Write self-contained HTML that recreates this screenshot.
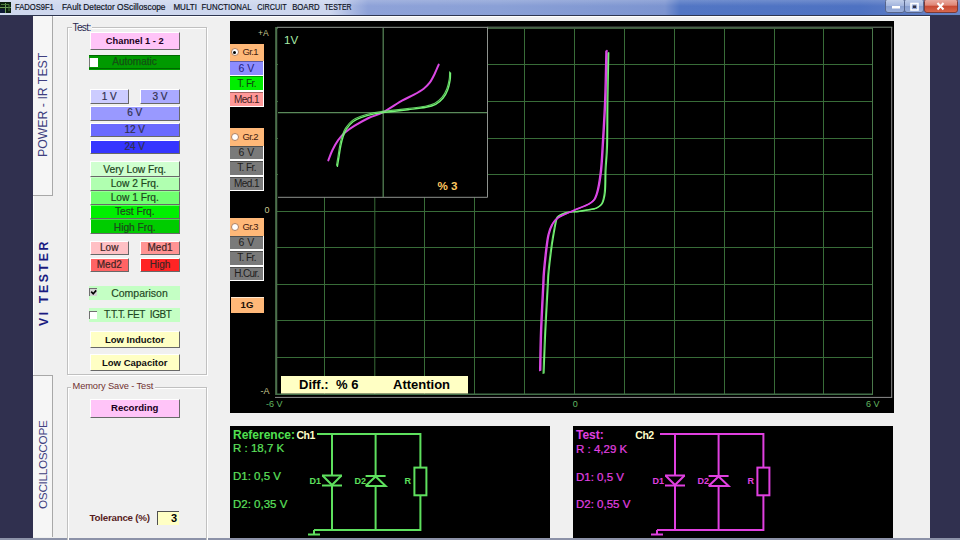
<!DOCTYPE html>
<html><head><meta charset="utf-8">
<style>
*{margin:0;padding:0;box-sizing:border-box}
html,body{width:960px;height:540px;overflow:hidden;background:#f0f0f0;font-family:"Liberation Sans",sans-serif;position:relative}
.a{position:absolute}
.t{position:absolute;white-space:nowrap;line-height:1}
#title{left:0;top:0;width:960px;height:15px;background:linear-gradient(90deg,#cfd8ee 0px,#ccd6ee 330px,#8ea2d8 368px,#8aa0d6 500px,#7c94d0 665px,#5276c4 680px,#4e72c2 860px,#6a86c8 960px)}
.btn{position:absolute;border-right:1px solid #6a6a6a;border-bottom:2px solid #6a6a6a;border-top:1px solid #fff;border-left:1px solid #fff;text-align:center;color:#303060;font-size:11px;line-height:12px}
.gb{position:absolute;border:1px solid #b8b8b8;box-shadow:1px 1px 0 #fff, inset 1px 1px 0 #fff}
.gr{position:absolute;left:230px;width:34px;background:#fff}
.gi{position:absolute;left:1px;width:32px;text-align:center;font-size:9.5px;line-height:13px;color:#202040}
</style></head><body>
<div id="title" class="a"></div>
<div class="a" style="left:0;top:0;width:960px;height:6px;background:linear-gradient(rgba(255,255,255,0.18),rgba(255,255,255,0))"></div>
<div class="a" style="left:0;top:15px;width:960px;height:1px;background:#2e3650"></div>
<div class="a" style="left:0;top:16px;width:960px;height:1px;background:#fff"></div>
<svg class="a" style="left:0;top:0" width="960" height="16">
<rect x="0" y="2" width="11" height="11" fill="#0c2010"/>
<rect x="0" y="9" width="6" height="4" fill="#101850" opacity="0.6"/>
<line x1="0" y1="7.5" x2="11" y2="7.5" stroke="#6a9a5a" stroke-width="1"/>
<line x1="5.5" y1="3" x2="5.5" y2="13" stroke="#6a9a5a" stroke-width="1"/>
<polyline points="1,4.5 9,4.5 9,11" fill="none" stroke="#4a7a3a" stroke-width="1"/>
<g font-family="Liberation Sans, sans-serif" font-size="9.4" fill="#10141e" stroke="#10141e" stroke-width="0.2">
<text x="15" y="10.3" textLength="38.8" lengthAdjust="spacingAndGlyphs">FADOS9F1</text>
<text x="62" y="10.3" textLength="103.5" lengthAdjust="spacingAndGlyphs">FAult Detector OScilloscope</text>
<text x="173.4" y="10.3" textLength="23.5" lengthAdjust="spacingAndGlyphs">MULTI</text>
<text x="201.6" y="10.3" textLength="50" lengthAdjust="spacingAndGlyphs">FUNCTIONAL</text>
<text x="257.2" y="10.3" textLength="29.4" lengthAdjust="spacingAndGlyphs">CIRCUIT</text>
<text x="292.2" y="10.3" textLength="27.5" lengthAdjust="spacingAndGlyphs">BOARD</text>
<text x="324.4" y="10.3" textLength="27.2" lengthAdjust="spacingAndGlyphs">TESTER</text>
</g>
<!-- window buttons -->
<rect x="885.5" y="-1" width="19" height="13.5" rx="2.5" fill="url(#gb)" stroke="#56648a" stroke-width="1"/>
<rect x="904.5" y="-1" width="19" height="13.5" rx="2.5" fill="url(#gb)" stroke="#56648a" stroke-width="1"/>
<rect x="924.5" y="-1" width="33" height="13.5" rx="2.5" fill="url(#gr)" stroke="#7a3a38" stroke-width="1"/>
<defs>
<linearGradient id="gb" x1="0" y1="0" x2="0" y2="1"><stop offset="0" stop-color="#c8d4ec"/><stop offset="0.5" stop-color="#a4b6de"/><stop offset="0.55" stop-color="#8aa0d0"/><stop offset="1" stop-color="#9cb0dc"/></linearGradient>
<linearGradient id="gr" x1="0" y1="0" x2="0" y2="1"><stop offset="0" stop-color="#eab0a8"/><stop offset="0.45" stop-color="#e08878"/><stop offset="0.55" stop-color="#c84a34"/><stop offset="1" stop-color="#d86a50"/></linearGradient>
</defs>
<rect x="892" y="6" width="8" height="2.5" fill="#fff"/>
<rect x="911" y="3.5" width="7" height="6.5" fill="none" stroke="#fff" stroke-width="1.6"/>
<rect x="913" y="5.5" width="3" height="2.5" fill="#334"/>
<path d="M937.5,3 L943.5,9.5 M943.5,3 L937.5,9.5" stroke="#fff" stroke-width="2"/>
</svg>
<!-- side navy -->
<div class="a" style="left:0;top:16px;width:33px;height:524px;background:#30304f"></div>
<div class="a" style="left:930px;top:16px;width:30px;height:524px;background:#30304f"></div>
<div class="a" style="left:0;top:537.5px;width:960px;height:2.5px;background:#8c92a8"></div>

<div class="a" style="left:33px;top:16px;width:20px;height:180px;background:#f6f6f6;border-right:1px solid #a8a8a8;border-bottom:1px solid #a8a8a8"></div>
<div class="a" style="left:33px;top:375px;width:20px;height:162px;background:#f6f6f6;border-right:1px solid #a8a8a8;border-top:1px solid #a8a8a8"></div>
<div class="a" style="left:33px;top:196px;width:1px;height:179px;background:#fff"></div>
<div class="t" style="left:37.3px;top:157px;font-size:12.3px;color:#404080;transform-origin:0 0;transform:rotate(-90deg)">POWER - IR TEST</div>
<div class="t" style="left:37.5px;top:326.3px;font-size:12.3px;font-weight:bold;color:#1a1a80;letter-spacing:2.6px;transform-origin:0 0;transform:rotate(-90deg)">VI TESTER</div>
<div class="t" style="left:37.6px;top:509.3px;font-size:11.8px;letter-spacing:-0.33px;color:#404080;transform-origin:0 0;transform:rotate(-90deg)">OSCILLOSCOPE</div>
<div class="a" style="left:67px;top:27px;width:140px;height:348px;border:1px solid #c0c0c0;box-shadow:1px 1px 0 #fff, inset 1px 1px 0 #fff"></div>
<div class="t" style="left:71.5px;top:22.6px;font-size:10.2px;color:#282850;background:#f0f0f0;padding:0 1px;letter-spacing:-0.7px">Test:</div>
<div class="a" style="left:67px;top:387px;width:140px;height:160px;border:1px solid #c0c0c0;box-shadow:1px 1px 0 #fff, inset 1px 1px 0 #fff"></div>
<div class="t" style="left:71px;top:382.3px;font-size:9.3px;color:#703030;background:#f0f0f0;padding:0 1.5px;letter-spacing:-0.1px">Memory Save - Test</div>
<div class="a" style="left:89.5px;top:32px;width:90.5px;height:18px;background:#ffc4f8;border-top:1px solid #fff;border-left:1px solid #fff;border-right:1px solid #686868;border-bottom:1px solid #686868"></div>
<div class="t" style="left:89.5px;top:32px;width:90.5px;height:18px;line-height:18px;text-align:center;font-size:9.3px;font-weight:bold;color:#200020;letter-spacing:0px">Channel 1 - 2</div>
<div class="a" style="left:89px;top:55px;width:91px;height:14.5px;background:#009a00"></div>
<div class="a" style="left:89px;top:55px;width:91px;height:1.2px;background:#006a00"></div>
<div class="a" style="left:89px;top:68.2px;width:91px;height:1.3px;background:#006a00"></div>
<div class="a" style="left:89px;top:58px;width:9.2px;height:9px;background:#fff;border-left:1.6px solid #787878"></div>
<div class="t" style="left:89px;top:55px;width:91px;height:14.5px;line-height:14.5px;text-align:center;font-size:10px;color:#145014;-webkit-text-stroke:0.25px #145014">Automatic</div>
<div class="a" style="left:89.5px;top:88.5px;width:39.5px;height:15.0px;background:#ccccff;border-top:1px solid #fff;border-left:1px solid #fff;border-right:1px solid #686868;border-bottom:1px solid #686868"></div>
<div class="t" style="left:89.5px;top:88.5px;width:39.5px;height:15.0px;line-height:15.0px;text-align:center;font-size:10px;font-weight:normal;color:#303050;letter-spacing:0px;-webkit-text-stroke:0.2px #303050">1 V</div>
<div class="a" style="left:140px;top:88.5px;width:40px;height:15.0px;background:#aaaaff;border-top:1px solid #fff;border-left:1px solid #fff;border-right:1px solid #686868;border-bottom:1px solid #686868"></div>
<div class="t" style="left:140px;top:88.5px;width:40px;height:15.0px;line-height:15.0px;text-align:center;font-size:10px;font-weight:normal;color:#303050;letter-spacing:0px;-webkit-text-stroke:0.2px #303050">3 V</div>
<div class="a" style="left:89.5px;top:106px;width:90.5px;height:14.5px;background:#9999ff;border-top:1px solid #fff;border-left:1px solid #fff;border-right:1px solid #686868;border-bottom:1px solid #686868"></div>
<div class="t" style="left:89.5px;top:106px;width:90.5px;height:14.5px;line-height:14.5px;text-align:center;font-size:10px;font-weight:normal;color:#303050;letter-spacing:0px;-webkit-text-stroke:0.2px #303050">6 V</div>
<div class="a" style="left:89.5px;top:123px;width:90.5px;height:14px;background:#6a6aff;border-top:1px solid #fff;border-left:1px solid #fff;border-right:1px solid #686868;border-bottom:1px solid #686868"></div>
<div class="t" style="left:89.5px;top:123px;width:90.5px;height:14px;line-height:14px;text-align:center;font-size:10px;font-weight:normal;color:#303050;letter-spacing:0px;-webkit-text-stroke:0.2px #303050">12 V</div>
<div class="a" style="left:89.5px;top:140px;width:90.5px;height:14px;background:#3535ff;border-top:1px solid #fff;border-left:1px solid #fff;border-right:1px solid #686868;border-bottom:1px solid #686868"></div>
<div class="t" style="left:89.5px;top:140px;width:90.5px;height:14px;line-height:14px;text-align:center;font-size:10px;font-weight:normal;color:#303050;letter-spacing:0px;-webkit-text-stroke:0.2px #303050">24 V</div>
<div class="a" style="left:89.5px;top:161px;width:90.5px;height:15.5px;background:#d0ffd0;border-top:1px solid #fff;border-left:1px solid #fff;border-right:1px solid #686868;border-bottom:1px solid #686868"></div>
<div class="t" style="left:89.5px;top:161.8px;width:90.5px;height:15.5px;line-height:15.5px;text-align:center;font-size:10.2px;font-weight:normal;color:#1e461e;letter-spacing:0px;-webkit-text-stroke:0.2px #1e461e">Very Low Frq.</div>
<div class="a" style="left:89.5px;top:176.5px;width:90.5px;height:14.0px;background:#b0ffb0;border-top:1px solid #c8ffc8;border-left:1px solid #fff;border-right:1px solid #686868;border-bottom:1px solid #686868"></div>
<div class="t" style="left:89.5px;top:176.8px;width:90.5px;height:14.0px;line-height:14.0px;text-align:center;font-size:10.2px;font-weight:normal;color:#1e461e;letter-spacing:0px;-webkit-text-stroke:0.2px #1e461e">Low 2 Frq.</div>
<div class="a" style="left:89.5px;top:190.5px;width:90.5px;height:14.0px;background:#70ff70;border-top:1px solid #98ff98;border-left:1px solid #fff;border-right:1px solid #686868;border-bottom:1px solid #686868"></div>
<div class="t" style="left:89.5px;top:190.8px;width:90.5px;height:14.0px;line-height:14.0px;text-align:center;font-size:10.2px;font-weight:normal;color:#1e461e;letter-spacing:0px;-webkit-text-stroke:0.2px #1e461e">Low 1 Frq.</div>
<div class="a" style="left:89.5px;top:204.5px;width:90.5px;height:14.5px;background:#00f000;border-top:1px solid #60ff60;border-left:1px solid #fff;border-right:1px solid #686868;border-bottom:1px solid #686868"></div>
<div class="t" style="left:89.5px;top:205.0px;width:90.5px;height:14.5px;line-height:14.5px;text-align:center;font-size:10.2px;font-weight:normal;color:#1e461e;letter-spacing:0px;-webkit-text-stroke:0.2px #1e461e">Test Frq.</div>
<div class="a" style="left:89.5px;top:219px;width:90.5px;height:15px;background:#00cc00;border-top:1px solid #40e040;border-left:1px solid #fff;border-right:1px solid #686868;border-bottom:1px solid #686868"></div>
<div class="t" style="left:89.5px;top:219.5px;width:90.5px;height:15px;line-height:15px;text-align:center;font-size:10.2px;font-weight:normal;color:#1e461e;letter-spacing:0px;-webkit-text-stroke:0.2px #1e461e">High Frq.</div>
<div class="a" style="left:89.5px;top:240.5px;width:39.5px;height:14.5px;background:#ffc0c4;border-top:1px solid #fff;border-left:1px solid #fff;border-right:1px solid #686868;border-bottom:1px solid #686868"></div>
<div class="t" style="left:89.5px;top:240.5px;width:39.5px;height:14.5px;line-height:14.5px;text-align:center;font-size:10px;font-weight:normal;color:#402424;letter-spacing:0px;-webkit-text-stroke:0.2px #402424">Low</div>
<div class="a" style="left:140px;top:240.5px;width:40px;height:14.5px;background:#ff9494;border-top:1px solid #fff;border-left:1px solid #fff;border-right:1px solid #686868;border-bottom:1px solid #686868"></div>
<div class="t" style="left:140px;top:240.5px;width:40px;height:14.5px;line-height:14.5px;text-align:center;font-size:10px;font-weight:normal;color:#402424;letter-spacing:0px;-webkit-text-stroke:0.2px #402424">Med1</div>
<div class="a" style="left:89.5px;top:258px;width:39.5px;height:14px;background:#ff6464;border-top:1px solid #fff;border-left:1px solid #fff;border-right:1px solid #686868;border-bottom:1px solid #686868"></div>
<div class="t" style="left:89.5px;top:258px;width:39.5px;height:14px;line-height:14px;text-align:center;font-size:10px;font-weight:normal;color:#402424;letter-spacing:0px;-webkit-text-stroke:0.2px #402424">Med2</div>
<div class="a" style="left:140px;top:258px;width:40px;height:14px;background:#ff2424;border-top:1px solid #fff;border-left:1px solid #fff;border-right:1px solid #686868;border-bottom:1px solid #686868"></div>
<div class="t" style="left:140px;top:258px;width:40px;height:14px;line-height:14px;text-align:center;font-size:10px;font-weight:normal;color:#402424;letter-spacing:0px;-webkit-text-stroke:0.2px #402424">High</div>
<div class="a" style="left:89px;top:285.5px;width:91px;height:14px;background:#c4ffc4"></div>
<div class="a" style="left:89px;top:288.3px;width:8px;height:7.5px;background:#d4d4d4;border-left:1.5px solid #707070;border-top:1.5px solid #707070"></div>
<svg class="a" style="left:89px;top:288px" width="9" height="9"><path d="M2.2,3.6 L4.2,5.8 L7.2,2.4" fill="none" stroke="#000" stroke-width="1.6"/></svg>
<div class="t" style="left:99px;top:285.5px;width:81px;height:14px;line-height:14px;text-align:center;font-size:10.5px;color:#1e461e;-webkit-text-stroke:0.15px #1e461e">Comparison</div>
<div class="a" style="left:89px;top:308px;width:91px;height:14px;background:#c4ffc4"></div>
<div class="a" style="left:89px;top:311px;width:8px;height:7.5px;background:#fff;border-left:1.5px solid #707070;border-top:1.5px solid #707070"></div>
<div class="t" style="left:104px;top:308px;height:14px;line-height:14px;font-size:10px;color:#1e461e;letter-spacing:-0.4px;-webkit-text-stroke:0.15px #1e461e">T.T.T.&nbsp;FET&nbsp; IGBT</div>
<div class="a" style="left:89.5px;top:330.5px;width:90.5px;height:17.5px;background:#ffffc4;border-top:1px solid #fff;border-left:1px solid #fff;border-right:1px solid #686868;border-bottom:1px solid #686868"></div>
<div class="t" style="left:89.5px;top:330.5px;width:90.5px;height:17.5px;line-height:17.5px;text-align:center;font-size:9.5px;font-weight:bold;color:#101010;letter-spacing:0px">Low Inductor</div>
<div class="a" style="left:89.5px;top:354px;width:90.5px;height:17px;background:#ffffc4;border-top:1px solid #fff;border-left:1px solid #fff;border-right:1px solid #686868;border-bottom:1px solid #686868"></div>
<div class="t" style="left:89.5px;top:354px;width:90.5px;height:17px;line-height:17px;text-align:center;font-size:9.5px;font-weight:bold;color:#101010;letter-spacing:0px">Low Capacitor</div>
<div class="a" style="left:89.5px;top:399px;width:90.5px;height:19px;background:#ffc4f8;border-top:1px solid #fff;border-left:1px solid #fff;border-right:1px solid #686868;border-bottom:1px solid #686868"></div>
<div class="t" style="left:89.5px;top:398.2px;width:90.5px;height:19px;line-height:19px;text-align:center;font-size:9.6px;font-weight:bold;color:#200020;letter-spacing:0px">Recording</div>
<div class="t" style="left:89.5px;top:513.3px;font-size:9.8px;font-weight:bold;color:#581e1e;letter-spacing:-0.25px">Tolerance (%)</div>
<div class="a" style="left:157px;top:511px;width:22px;height:13.5px;background:#ffffc4;border-left:1.5px solid #505050;border-top:1.5px solid #505050"></div>
<div class="t" style="left:157px;top:513px;font-size:11px;font-weight:bold;color:#000"><span style="display:inline-block;width:20px;text-align:right">3</span></div>
<!-- plot -->
<div class="a" style="left:230px;top:21px;width:664px;height:392px;background:#000"></div>
<svg class="a" style="left:0;top:0" width="960" height="540">
<line x1="324.5" y1="28.5" x2="324.5" y2="394.0" stroke="#386c38" stroke-width="1"/>
<line x1="374.8" y1="28.5" x2="374.8" y2="394.0" stroke="#386c38" stroke-width="1"/>
<line x1="424.5" y1="28.5" x2="424.5" y2="394.0" stroke="#386c38" stroke-width="1"/>
<line x1="474.5" y1="28.5" x2="474.5" y2="394.0" stroke="#386c38" stroke-width="1"/>
<line x1="524.5" y1="28.5" x2="524.5" y2="394.0" stroke="#386c38" stroke-width="1"/>
<line x1="574.5" y1="28.5" x2="574.5" y2="394.0" stroke="#386c38" stroke-width="1"/>
<line x1="624.5" y1="28.5" x2="624.5" y2="394.0" stroke="#386c38" stroke-width="1"/>
<line x1="674.5" y1="28.5" x2="674.5" y2="394.0" stroke="#386c38" stroke-width="1"/>
<line x1="724.5" y1="28.5" x2="724.5" y2="394.0" stroke="#386c38" stroke-width="1"/>
<line x1="774.5" y1="28.5" x2="774.5" y2="394.0" stroke="#386c38" stroke-width="1"/>
<line x1="823.5" y1="28.5" x2="823.5" y2="394.0" stroke="#386c38" stroke-width="1"/>
<line x1="276.0" y1="64.5" x2="872.5" y2="64.5" stroke="#386c38" stroke-width="1"/>
<line x1="276.0" y1="101.5" x2="872.5" y2="101.5" stroke="#386c38" stroke-width="1"/>
<line x1="276.0" y1="138.5" x2="872.5" y2="138.5" stroke="#386c38" stroke-width="1"/>
<line x1="276.0" y1="174.5" x2="872.5" y2="174.5" stroke="#386c38" stroke-width="1"/>
<line x1="276.0" y1="211.5" x2="872.5" y2="211.5" stroke="#386c38" stroke-width="1"/>
<line x1="276.0" y1="247.5" x2="872.5" y2="247.5" stroke="#386c38" stroke-width="1"/>
<line x1="276.0" y1="284.5" x2="872.5" y2="284.5" stroke="#386c38" stroke-width="1"/>
<line x1="276.0" y1="320.5" x2="872.5" y2="320.5" stroke="#386c38" stroke-width="1"/>
<line x1="276.0" y1="357.5" x2="872.5" y2="357.5" stroke="#386c38" stroke-width="1"/>
<line x1="891.7" y1="27" x2="891.7" y2="397.4" stroke="#8c8c8c" stroke-width="1"/>
<line x1="275" y1="397.4" x2="892.2" y2="397.4" stroke="#8c8c8c" stroke-width="1"/>
<line x1="487" y1="27.2" x2="892.2" y2="27.2" stroke="#7a8a7a" stroke-width="1"/>
<line x1="276.5" y1="28.2" x2="872.5" y2="28.2" stroke="#3c5e3c" stroke-width="1.6"/>
<line x1="276.2" y1="27" x2="276.2" y2="395" stroke="#4c704c" stroke-width="2.1"/>
<line x1="276" y1="394.2" x2="872.5" y2="394.2" stroke="#44704a" stroke-width="1.5"/>
<line x1="872.5" y1="28" x2="872.5" y2="395" stroke="#4a784a" stroke-width="1"/>
<rect x="278" y="28" width="209.5" height="169.3" fill="#000"/>
<polyline points="277,27.3 487.5,27.3 487.5,197.3 278,197.3" fill="none" stroke="#8e928e" stroke-width="1"/>
<line x1="383.2" y1="28" x2="383.2" y2="197" stroke="#5a8a5a" stroke-width="1.2"/>
<line x1="278" y1="112.7" x2="487" y2="112.7" stroke="#5a8a5a" stroke-width="1.2"/>
<path d="M328.30,160.40 C329.00,158.67 330.88,153.35 332.50,150.00 C334.12,146.65 335.92,143.20 338.00,140.30 C340.08,137.40 342.22,135.03 345.00,132.60 C347.78,130.17 350.77,128.13 354.70,125.70 C358.63,123.27 363.85,120.25 368.60,118.00 C373.35,115.75 377.63,115.08 383.20,112.20 C388.77,109.32 396.87,103.62 402.00,100.70 C407.13,97.78 410.38,96.70 414.00,94.70 C417.62,92.70 421.08,90.70 423.70,88.70 C426.32,86.70 427.90,85.12 429.70,82.70 C431.50,80.28 433.00,77.22 434.50,74.20 C436.00,71.18 438.00,66.20 438.70,64.60" fill="none" stroke="#da48e4" stroke-width="2.0" stroke-linejoin="round" stroke-linecap="round" opacity="1"/>
<path d="M336.50,165.30 C336.73,163.95 337.28,160.63 337.85,157.20 C338.42,153.77 339.21,148.17 339.90,144.70 C340.59,141.23 341.07,139.17 342.00,136.40 C342.93,133.63 343.77,130.77 345.50,128.10 C347.23,125.43 349.85,122.37 352.40,120.40 C354.95,118.43 357.32,117.57 360.80,116.30 C364.28,115.03 369.72,113.62 373.30,112.80 C376.88,111.98 376.67,112.10 382.30,111.40 C387.93,110.70 399.95,109.47 407.10,108.60 C414.25,107.73 420.58,107.10 425.20,106.20 C429.82,105.30 431.98,104.70 434.80,103.20 C437.62,101.70 440.10,99.60 442.10,97.20 C444.10,94.80 445.62,91.80 446.80,88.80 C447.98,85.80 448.73,82.02 449.20,79.20 C449.67,76.38 449.53,73.12 449.60,71.90" fill="none" stroke="#74f274" stroke-width="1.1" stroke-linejoin="round" stroke-linecap="round" opacity="0.85"/>
<path d="M337.40,166.40 C337.62,165.05 338.18,161.73 338.75,158.30 C339.32,154.87 340.11,149.27 340.80,145.80 C341.49,142.33 341.97,140.27 342.90,137.50 C343.83,134.73 344.67,131.87 346.40,129.20 C348.13,126.53 350.75,123.47 353.30,121.50 C355.85,119.53 358.22,118.67 361.70,117.40 C365.18,116.13 370.62,114.72 374.20,113.90 C377.78,113.08 377.57,113.20 383.20,112.50 C388.83,111.80 400.85,110.57 408.00,109.70 C415.15,108.83 421.48,108.20 426.10,107.30 C430.72,106.40 432.88,105.80 435.70,104.30 C438.52,102.80 441.00,100.70 443.00,98.30 C445.00,95.90 446.52,92.90 447.70,89.90 C448.88,86.90 449.63,83.12 450.10,80.30 C450.57,77.48 450.43,74.22 450.50,73.00" fill="none" stroke="#74f274" stroke-width="1.4" stroke-linejoin="round" stroke-linecap="round" opacity="1"/>
<path d="M607.80,53.20 C607.65,61.07 607.12,85.03 606.90,100.40 C606.68,115.77 606.82,133.80 606.50,145.40 C606.18,157.00 605.37,162.18 605.00,170.00 C604.63,177.82 604.92,186.62 604.30,192.30 C603.68,197.98 602.78,201.40 601.30,204.10 C599.82,206.80 597.62,207.52 595.40,208.50 C593.18,209.48 590.83,209.47 588.00,210.00 C585.17,210.53 581.62,211.32 578.40,211.70 C575.18,212.08 571.18,212.00 568.70,212.30 C566.22,212.60 565.22,212.88 563.50,213.50 C561.78,214.12 559.63,215.13 558.40,216.00 C557.17,216.87 556.85,216.52 556.10,218.70 C555.35,220.88 554.75,224.40 553.90,229.10 C553.05,233.80 551.98,239.73 551.00,246.90 C550.02,254.07 548.63,265.68 548.00,272.10 C547.37,278.52 547.75,275.47 547.20,285.40 C546.65,295.33 545.40,317.03 544.70,331.70 C544.00,346.37 543.28,366.45 543.00,373.40" fill="none" stroke="#74f274" stroke-width="1.1" stroke-linejoin="round" stroke-linecap="round" opacity="0.8"/>
<path d="M608.70,52.80 C608.55,60.67 608.02,84.63 607.80,100.00 C607.58,115.37 607.72,133.40 607.40,145.00 C607.08,156.60 606.27,161.78 605.90,169.60 C605.53,177.42 605.82,186.22 605.20,191.90 C604.58,197.58 603.68,201.00 602.20,203.70 C600.72,206.40 598.52,207.12 596.30,208.10 C594.08,209.08 591.73,209.07 588.90,209.60 C586.07,210.13 582.52,210.92 579.30,211.30 C576.08,211.68 572.08,211.60 569.60,211.90 C567.12,212.20 566.12,212.48 564.40,213.10 C562.68,213.72 560.53,214.73 559.30,215.60 C558.07,216.47 557.75,216.12 557.00,218.30 C556.25,220.48 555.65,224.00 554.80,228.70 C553.95,233.40 552.88,239.33 551.90,246.50 C550.92,253.67 549.53,265.28 548.90,271.70 C548.27,278.12 548.65,275.07 548.10,285.00 C547.55,294.93 546.30,316.63 545.60,331.30 C544.90,345.97 544.18,366.05 543.90,373.00" fill="none" stroke="#74f274" stroke-width="1.4" stroke-linejoin="round" stroke-linecap="round" opacity="1"/>
<path d="M605.90,51.10 C605.68,59.43 605.22,85.37 604.60,101.10 C603.98,116.83 602.88,134.00 602.20,145.50 C601.52,157.00 601.28,162.78 600.50,170.10 C599.72,177.42 598.62,184.45 597.50,189.40 C596.38,194.35 595.47,197.23 593.80,199.80 C592.13,202.37 590.97,202.97 587.50,204.80 C584.03,206.63 578.00,208.60 573.00,210.80 C568.00,213.00 561.07,215.67 557.50,218.00 C553.93,220.33 553.20,221.95 551.60,224.80 C550.00,227.65 548.88,230.92 547.90,235.10 C546.92,239.28 546.45,243.72 545.70,249.90 C544.95,256.08 543.90,266.27 543.40,272.20 C542.90,278.13 543.18,275.57 542.70,285.50 C542.22,295.43 541.02,317.60 540.50,331.80 C539.98,346.00 539.75,364.22 539.60,370.70" fill="none" stroke="#da48e4" stroke-width="1.3" stroke-linejoin="round" stroke-linecap="round" opacity="1"/>
<path d="M606.90,50.60 C606.68,58.93 606.22,84.87 605.60,100.60 C604.98,116.33 603.88,133.50 603.20,145.00 C602.52,156.50 602.28,162.28 601.50,169.60 C600.72,176.92 599.62,183.95 598.50,188.90 C597.38,193.85 596.47,196.73 594.80,199.30 C593.13,201.87 591.97,202.47 588.50,204.30 C585.03,206.13 579.00,208.10 574.00,210.30 C569.00,212.50 562.07,215.17 558.50,217.50 C554.93,219.83 554.20,221.45 552.60,224.30 C551.00,227.15 549.88,230.42 548.90,234.60 C547.92,238.78 547.45,243.22 546.70,249.40 C545.95,255.58 544.90,265.77 544.40,271.70 C543.90,277.63 544.18,275.07 543.70,285.00 C543.22,294.93 542.02,317.10 541.50,331.30 C540.98,345.50 540.75,363.72 540.60,370.20" fill="none" stroke="#da48e4" stroke-width="1.6" stroke-linejoin="round" stroke-linecap="round" opacity="1"/>
<text x="258" y="36" fill="#c8c890" font-size="8.5" font-weight="normal" text-anchor="start" font-family="Liberation Sans, sans-serif">+A</text>
<text x="264.5" y="213" fill="#c8c890" font-size="9" font-weight="normal" text-anchor="start" font-family="Liberation Sans, sans-serif">0</text>
<text x="260.5" y="394" fill="#c8c890" font-size="9" font-weight="normal" text-anchor="start" font-family="Liberation Sans, sans-serif">-A</text>
<text x="266" y="406.7" fill="#62b862" font-size="9" font-weight="normal" text-anchor="start" font-family="Liberation Sans, sans-serif">-6 V</text>
<text x="572.8" y="406.7" fill="#62b862" font-size="9" font-weight="normal" text-anchor="start" font-family="Liberation Sans, sans-serif">0</text>
<text x="866" y="406.7" fill="#62b862" font-size="9" font-weight="normal" text-anchor="start" font-family="Liberation Sans, sans-serif">6 V</text>
<text x="284" y="44" fill="#a8eca8" font-size="11.6" font-weight="normal" text-anchor="start" font-family="Liberation Sans, sans-serif">1V</text>
<text x="437.5" y="190.3" fill="#ffc860" font-size="11.6" font-weight="bold" text-anchor="start" font-family="Liberation Sans, sans-serif">% 3</text>
<rect x="281" y="376" width="187" height="17.5" fill="#ffffc4"/>
<text x="299" y="389" fill="#000" font-size="13" font-weight="bold" text-anchor="start" font-family="Liberation Sans, sans-serif">Diff.:</text>
<text x="336" y="389" fill="#000" font-size="13" font-weight="bold" text-anchor="start" font-family="Liberation Sans, sans-serif">% 6</text>
<text x="393" y="389" fill="#000" font-size="13" font-weight="bold" text-anchor="start" font-family="Liberation Sans, sans-serif">Attention</text>
</svg>

<!-- bottom panels -->
<div class="a" style="left:230px;top:426px;width:320px;height:112px;background:#000"></div>
<div class="a" style="left:573px;top:426px;width:320px;height:112px;background:#000"></div>
<div class="a" style="left:230px;top:43.5px;width:34px;height:63px;background:#fff"></div>
<div class="a" style="left:230px;top:43.5px;width:34px;height:17.5px;background:#ffb878"></div>
<div class="a" style="left:230.5px;top:48.0px;width:8px;height:8px;border-radius:50%;background:#fff;border:1px solid #b08060"></div>
<div class="a" style="left:233px;top:50.5px;width:3px;height:3px;border-radius:50%;background:#000"></div>
<div class="t" style="left:242.5px;top:47.3px;font-size:9.5px;color:#402010;letter-spacing:-0.6px">Gr.1</div>
<div class="a" style="left:230px;top:61.0px;width:33px;height:13.5px;background:#8c8cff;border-top:1px solid rgba(0,0,0,0.35)"></div>
<div class="t" style="left:230.5px;top:62.5px;width:32px;text-align:center;font-size:10.5px;color:#202080;letter-spacing:0px">6 V</div>
<div class="a" style="left:230px;top:76.0px;width:33px;height:14px;background:#00ee00;border-top:1px solid rgba(0,0,0,0.35)"></div>
<div class="t" style="left:230.5px;top:78.5px;width:32px;text-align:center;font-size:10px;color:#104010;letter-spacing:-0.6px">T. Fr.</div>
<div class="a" style="left:230px;top:92.0px;width:33px;height:13.5px;background:#ff9898;border-top:1px solid rgba(0,0,0,0.35)"></div>
<div class="t" style="left:230.5px;top:94.5px;width:32px;text-align:center;font-size:10px;color:#402020;letter-spacing:-0.6px">Med.1</div>
<div class="a" style="left:230px;top:128px;width:34px;height:63px;background:#fff"></div>
<div class="a" style="left:230px;top:128px;width:34px;height:17.5px;background:#ffb878"></div>
<div class="a" style="left:230.5px;top:132.5px;width:8px;height:8px;border-radius:50%;background:#fff;border:1px solid #b08060"></div>
<div class="t" style="left:242.5px;top:131.8px;font-size:9.5px;color:#402010;letter-spacing:-0.6px">Gr.2</div>
<div class="a" style="left:230px;top:145.5px;width:33px;height:13.5px;background:#7a7a7a;border-top:1px solid rgba(0,0,0,0.35)"></div>
<div class="t" style="left:230.5px;top:147.0px;width:32px;text-align:center;font-size:10.5px;color:#202020;letter-spacing:0px">6 V</div>
<div class="a" style="left:230px;top:160.5px;width:33px;height:14px;background:#7a7a7a;border-top:1px solid rgba(0,0,0,0.35)"></div>
<div class="t" style="left:230.5px;top:163.0px;width:32px;text-align:center;font-size:10px;color:#202020;letter-spacing:-0.6px">T. Fr.</div>
<div class="a" style="left:230px;top:176.5px;width:33px;height:13.5px;background:#7a7a7a;border-top:1px solid rgba(0,0,0,0.35)"></div>
<div class="t" style="left:230.5px;top:179.0px;width:32px;text-align:center;font-size:10px;color:#202020;letter-spacing:-0.6px">Med.1</div>
<div class="a" style="left:230px;top:218px;width:34px;height:63px;background:#fff"></div>
<div class="a" style="left:230px;top:218px;width:34px;height:17.5px;background:#ffb878"></div>
<div class="a" style="left:230.5px;top:222.5px;width:8px;height:8px;border-radius:50%;background:#fff;border:1px solid #b08060"></div>
<div class="t" style="left:242.5px;top:221.8px;font-size:9.5px;color:#402010;letter-spacing:-0.6px">Gr.3</div>
<div class="a" style="left:230px;top:235.5px;width:33px;height:13.5px;background:#7a7a7a;border-top:1px solid rgba(0,0,0,0.35)"></div>
<div class="t" style="left:230.5px;top:237.0px;width:32px;text-align:center;font-size:10.5px;color:#202020;letter-spacing:0px">6 V</div>
<div class="a" style="left:230px;top:250.5px;width:33px;height:14px;background:#7a7a7a;border-top:1px solid rgba(0,0,0,0.35)"></div>
<div class="t" style="left:230.5px;top:253.0px;width:32px;text-align:center;font-size:10px;color:#202020;letter-spacing:-0.6px">T. Fr.</div>
<div class="a" style="left:230px;top:266.5px;width:33px;height:13.5px;background:#7a7a7a;border-top:1px solid rgba(0,0,0,0.35)"></div>
<div class="t" style="left:230.5px;top:269.0px;width:32px;text-align:center;font-size:10px;color:#202020;letter-spacing:-0.6px">H.Cur.</div>
<div class="a" style="left:230.5px;top:297.3px;width:33.3px;height:16.2px;background:#ffb878;border-top:1px solid #ffe8d0"></div>
<div class="t" style="left:230.5px;top:300px;font-size:9.6px;font-weight:bold;color:#201008"><span style="display:inline-block;width:33px;text-align:center">1G</span></div>
<svg class="a" style="left:0;top:0" width="960" height="540">
<polyline points="317,434 420.4,434 420.4,467.6" stroke="#5ee05e" stroke-width="2" fill="none"/>
<polyline points="420.4,495.3 420.4,530 314,530" stroke="#5ee05e" stroke-width="2" fill="none"/>
<line x1="332" y1="434" x2="332" y2="475.5" stroke="#5ee05e" stroke-width="2" fill="none"/>
<line x1="332" y1="485.5" x2="332" y2="530" stroke="#5ee05e" stroke-width="2" fill="none"/>
<line x1="375.6" y1="434" x2="375.6" y2="476" stroke="#5ee05e" stroke-width="2" fill="none"/>
<line x1="375.6" y1="486" x2="375.6" y2="530" stroke="#5ee05e" stroke-width="2" fill="none"/>
<line x1="314" y1="530" x2="314" y2="534.5" stroke="#5ee05e" stroke-width="2" fill="none"/>
<line x1="308" y1="534.5" x2="320" y2="534.5" stroke="#5ee05e" stroke-width="2" fill="none"/>
<rect x="414.4" y="467.6" width="12" height="27.7" stroke="#5ee05e" stroke-width="2" fill="none"/>
<line x1="322" y1="475.5" x2="342" y2="475.5" stroke="#5ee05e" stroke-width="2" fill="none"/>
<polyline points="322.5,475.5 332,485 341.5,475.5" stroke="#5ee05e" stroke-width="2" fill="none"/>
<line x1="322" y1="485.5" x2="342" y2="485.5" stroke="#5ee05e" stroke-width="2" fill="none"/>
<line x1="365.6" y1="476" x2="385.6" y2="476" stroke="#5ee05e" stroke-width="2" fill="none"/>
<polyline points="365.6,486 375.6,476.5 385.6,486 365.6,486" stroke="#5ee05e" stroke-width="2" fill="none"/>
</svg>
<div class="t" style="left:233px;top:428.5px;font-size:12px;font-weight:bold;color:#50e050">Reference:</div>
<div class="t" style="left:296.5px;top:429.5px;font-size:10.5px;font-weight:bold;color:#ffffc8;letter-spacing:-0.5px">Ch1</div>
<div class="t" style="left:233px;top:443px;font-size:11.5px;color:#5ee05e;-webkit-text-stroke:0.2px #5ee05e">R : 18,7 K</div>
<div class="t" style="left:233px;top:471px;font-size:11.5px;color:#5ee05e;-webkit-text-stroke:0.2px #5ee05e">D1: 0,5 V</div>
<div class="t" style="left:233px;top:499px;font-size:11.5px;color:#5ee05e;-webkit-text-stroke:0.2px #5ee05e">D2: 0,35 V</div>
<div class="t" style="left:309.5px;top:476.8px;font-size:9px;font-weight:bold;color:#5ee05e">D1</div>
<div class="t" style="left:354.5px;top:476.8px;font-size:9px;font-weight:bold;color:#5ee05e">D2</div>
<div class="t" style="left:404.4px;top:476.8px;font-size:9px;font-weight:bold;color:#5ee05e">R</div>
<svg class="a" style="left:0;top:0" width="960" height="540">
<polyline points="660,434 763.4,434 763.4,467.6" stroke="#e040e0" stroke-width="2" fill="none"/>
<polyline points="763.4,495.3 763.4,530 657,530" stroke="#e040e0" stroke-width="2" fill="none"/>
<line x1="675" y1="434" x2="675" y2="475.5" stroke="#e040e0" stroke-width="2" fill="none"/>
<line x1="675" y1="485.5" x2="675" y2="530" stroke="#e040e0" stroke-width="2" fill="none"/>
<line x1="718.6" y1="434" x2="718.6" y2="476" stroke="#e040e0" stroke-width="2" fill="none"/>
<line x1="718.6" y1="486" x2="718.6" y2="530" stroke="#e040e0" stroke-width="2" fill="none"/>
<line x1="657" y1="530" x2="657" y2="534.5" stroke="#e040e0" stroke-width="2" fill="none"/>
<line x1="651" y1="534.5" x2="663" y2="534.5" stroke="#e040e0" stroke-width="2" fill="none"/>
<rect x="757.4" y="467.6" width="12" height="27.7" stroke="#e040e0" stroke-width="2" fill="none"/>
<line x1="665" y1="475.5" x2="685" y2="475.5" stroke="#e040e0" stroke-width="2" fill="none"/>
<polyline points="665.5,475.5 675,485 684.5,475.5" stroke="#e040e0" stroke-width="2" fill="none"/>
<line x1="665" y1="485.5" x2="685" y2="485.5" stroke="#e040e0" stroke-width="2" fill="none"/>
<line x1="708.6" y1="476" x2="728.6" y2="476" stroke="#e040e0" stroke-width="2" fill="none"/>
<polyline points="708.6,486 718.6,476.5 728.6,486 708.6,486" stroke="#e040e0" stroke-width="2" fill="none"/>
</svg>
<div class="t" style="left:576px;top:428.5px;font-size:12px;font-weight:bold;color:#e040e0">Test:</div>
<div class="t" style="left:635.3px;top:429.5px;font-size:10.5px;font-weight:bold;color:#ffffc8;letter-spacing:-0.5px">Ch2</div>
<div class="t" style="left:576px;top:443.5px;font-size:11.5px;color:#e040e0;-webkit-text-stroke:0.2px #e040e0">R : 4,29 K</div>
<div class="t" style="left:576px;top:471.5px;font-size:11.5px;color:#e040e0;-webkit-text-stroke:0.2px #e040e0">D1: 0,5 V</div>
<div class="t" style="left:576px;top:499px;font-size:11.5px;color:#e040e0;-webkit-text-stroke:0.2px #e040e0">D2: 0,55 V</div>
<div class="t" style="left:652.5px;top:476.8px;font-size:9px;font-weight:bold;color:#e040e0">D1</div>
<div class="t" style="left:697.5px;top:476.8px;font-size:9px;font-weight:bold;color:#e040e0">D2</div>
<div class="t" style="left:747.4px;top:476.8px;font-size:9px;font-weight:bold;color:#e040e0">R</div>
</body></html>
